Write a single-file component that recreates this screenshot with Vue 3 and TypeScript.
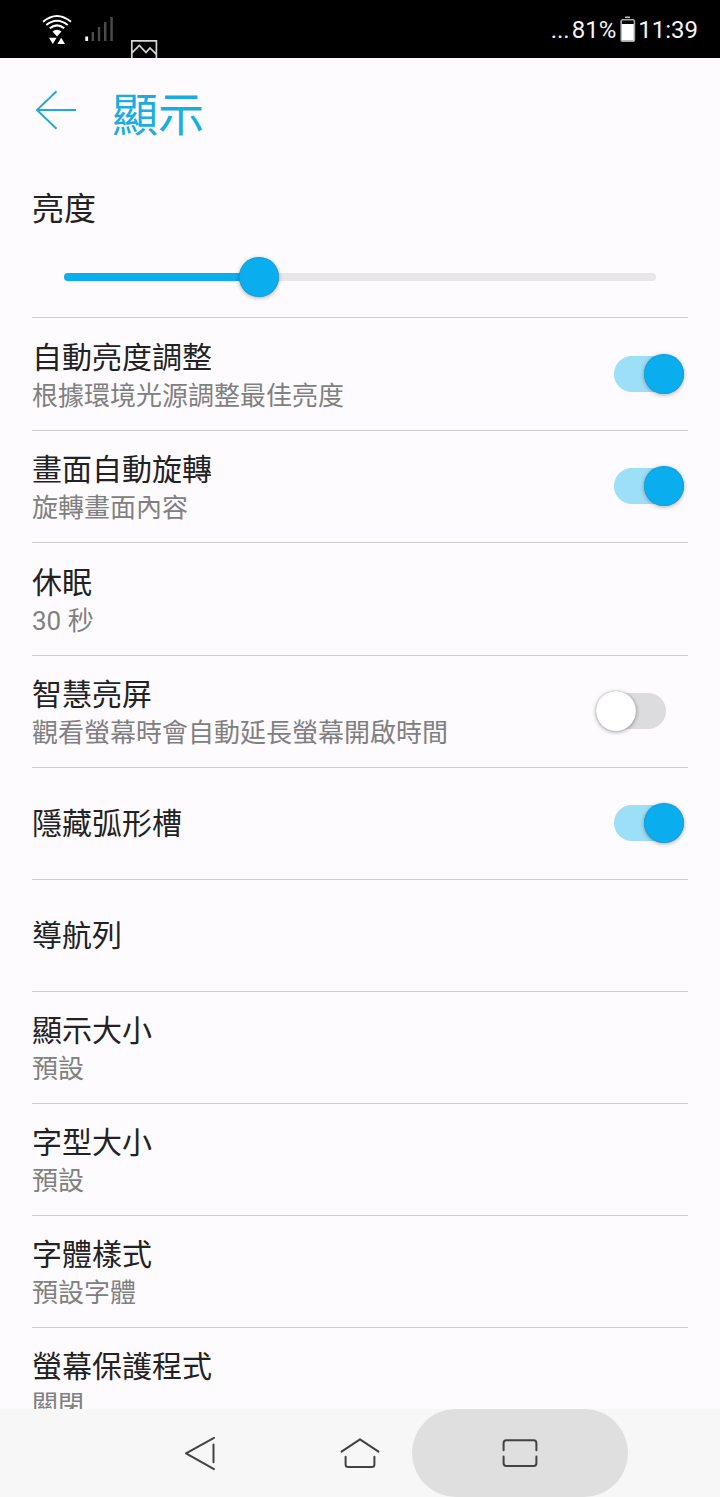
<script setup lang="ts">
interface SettingRow {
  title: string
  summary?: string
  toggle?: 'on' | 'off'
}

const brightness = 33

const rows: SettingRow[] = [
  { title: '自動亮度調整', summary: '根據環境光源調整最佳亮度', toggle: 'on' },
  { title: '畫面自動旋轉', summary: '旋轉畫面內容', toggle: 'on' },
  { title: '休眠', summary: '30 秒' },
  { title: '智慧亮屏', summary: '觀看螢幕時會自動延長螢幕開啟時間', toggle: 'off' },
  { title: '隱藏弧形槽', toggle: 'on' },
  { title: '導航列' },
  { title: '顯示大小', summary: '預設' },
  { title: '字型大小', summary: '預設' },
  { title: '字體樣式', summary: '預設字體' },
  { title: '螢幕保護程式', summary: '關閉' },
]
</script>

<template>
  <div class="phone">
    <header class="status">
      <svg class="status-icons" width="170" height="58" viewBox="0 0 170 58">
        <g fill="none" stroke="#fff" stroke-width="2">
          <path d="M43 21.8Q57 10.2 71 21.8" />
          <path d="M46.3 25Q57 16.4 67.7 25" />
          <path d="M49.8 28.2Q57 22.6 64.2 28.2" />
        </g>
        <path d="M52.5 31.5Q57 28 61.5 31.5L57 36.5Z" fill="#fff" />
        <path d="M49 37.7h7.6L52.8 44ZM57.4 44h7.6L61.2 37.7Z" fill="#fff" />
        <rect x="85.3" y="36.5" width="2.8" height="4.5" fill="#fff" />
        <path d="M91.6 32h2.4v9h-2.4zM97.8 27h2.4v14h-2.4zM104 22h2.4v19H104zM110.4 17h2.4v24h-2.4z" fill="#4b4b4b" />
        <path d="M131.8 60V40.8h24.6V60M132 52.8l7.3-7.3 6.7 7 4-4.6 6.2 6.2" fill="none" stroke="#d6d6d6" stroke-width="1.7" />
      </svg>
      <div class="status-right">
        <span class="dots">...</span>
        <span class="percent">81%</span>
        <svg class="battery" width="16" height="27" viewBox="0 0 16 27">
          <path d="M5 1.3h5" stroke="#bbb" stroke-width="1.6" />
          <rect x="1.2" y="3.7" width="13.2" height="21.6" rx="1.8" fill="#000" stroke="#a8a8a8" stroke-width="1.6" />
          <rect x="1.8" y="8" width="12" height="16.6" fill="#fff" />
        </svg>
        <span class="clock">11:39</span>
      </div>
    </header>

    <main class="screen">
      <div class="titlebar">
        <svg class="back" width="42" height="42" viewBox="0 0 42 42">
          <path d="M42 21H3M22.5 2.2L3 21L22.5 39.8" fill="none" stroke="#21a9dc" stroke-width="1.9" />
        </svg>
        <h1>顯示</h1>
      </div>

      <section class="brightness">
        <h2>亮度</h2>
        <div class="track">
          <div class="fill" :style="{ width: brightness + '%' }"><i class="knob"></i></div>
        </div>
      </section>

      <section v-for="row in rows" :key="row.title" class="row">
        <div class="labels" :class="{ double: row.summary }">
          <div class="title">{{ row.title }}</div>
          <div v-if="row.summary" class="summary">{{ row.summary }}</div>
        </div>
        <div v-if="row.toggle" class="toggle" :class="row.toggle"><i class="knob"></i></div>
      </section>
    </main>

    <nav class="navbar">
      <svg width="40" height="40" viewBox="0 0 40 40">
        <path d="M34 4.8L6 20.3L34 36.1M33.5 11.5V29.3" />
      </svg>
      <svg width="40" height="40" viewBox="0 0 40 40">
        <path d="M1.5 18.7L20 6.3L38.5 18.7M5.6 23.8V31.5Q5.6 34 8.1 34H31.9Q34.4 34 34.4 31.5V23.8" />
      </svg>
      <div class="pressed">
        <svg width="40" height="40" viewBox="0 0 40 40">
          <path d="M3.6 17.3V10Q3.6 7.2 6.4 7.2H33.6Q36.4 7.2 36.4 10V17.3M3.6 23.5V30.3Q3.6 33.1 6.4 33.1H33.6Q36.4 33.1 36.4 30.3V23.5" />
        </svg>
      </div>
    </nav>
  </div>
</template>

<style>
body {
  margin: 0;
}
</style>

<style scoped>
.phone {
  width: 720px;
  height: 1497px;
  display: flex;
  flex-direction: column;
  overflow: hidden;
  background: #fefbff;
  font-family: Roboto, 'Noto Sans CJK TC', sans-serif;
  color: #222;
}
.status {
  height: 58px;
  flex: none;
  display: flex;
  justify-content: space-between;
  background: #000;
  color: #f4f4f4;
}
.status-right {
  display: flex;
  height: 58px;
  padding-right: 22px;
  font-size: 24px;
  line-height: 60px;
}
.dots {
  margin-right: 2px;
}
.battery {
  margin: 16px 2px 0 4px;
}
.screen {
  flex: 1;
  min-height: 0;
  overflow: hidden;
}
.titlebar {
  height: 112px;
  display: flex;
  align-items: center;
}
.back {
  margin: -8px 0 0 34px;
}
h1 {
  margin: 2px 0 0 36px;
  font-size: 46px;
  line-height: 60px;
  font-weight: 400;
  color: #19ade3;
}
.brightness {
  height: 147px;
  margin: 0 32px;
  border-bottom: 1px solid #cfcdd1;
}
h2 {
  margin: 0;
  padding-top: 19px;
  font-size: 32px;
  line-height: 40px;
  font-weight: 400;
}
.track {
  height: 8px;
  margin: 44px 32px 0;
  border-radius: 4px;
  background: #e7e6e8;
}
.fill {
  height: 8px;
  display: flex;
  align-items: center;
  justify-content: flex-end;
  border-radius: 4px;
  background: #0aaeef;
}
.knob {
  width: 40px;
  height: 40px;
  flex: none;
  border-radius: 50%;
  background: #0aaeef;
  box-shadow: 0 1px 4px rgba(0, 0, 0, 0.32), inset 0 0 1px rgba(0, 50, 80, 0.5);
}
.fill .knob {
  margin-right: -20px;
}
.row {
  box-sizing: border-box;
  height: 112px;
  margin: 0 32px;
  display: flex;
  align-items: center;
  justify-content: space-between;
  border-bottom: 1px solid #cfcdd1;
}
.row:nth-of-type(2),
.row:nth-of-type(4) {
  height: 113px;
}
.double {
  padding-top: 5px;
}
.title {
  font-size: 30px;
  line-height: 38px;
}
.summary {
  font-size: 26px;
  line-height: 38px;
  color: #808080;
}
.toggle {
  width: 70px;
  height: 36px;
  margin: -1px 4px 0 0;
  display: flex;
  align-items: center;
  justify-content: flex-end;
  border-radius: 18px;
  background: #9ddff7;
}
.row:nth-of-type(2) .toggle {
  margin-top: 0;
}
.toggle.off {
  margin-right: 22px;
  justify-content: flex-start;
  background: #dcdbde;
}
.off .knob {
  background: #fff;
  box-shadow: 0 1px 4px rgba(0, 0, 0, 0.36), 0 0 1px rgba(0, 0, 0, 0.3);
}
.navbar {
  height: 88px;
  flex: none;
  display: flex;
  align-items: center;
  background: #f7f7f7;
}
.navbar svg {
  fill: none;
  stroke: #424242;
  stroke-width: 2;
  stroke-linecap: round;
  stroke-linejoin: round;
}
.navbar > svg:first-child {
  margin-left: 180px;
}
.navbar > svg:nth-child(2) {
  margin-left: 120px;
}
.pressed {
  width: 216px;
  height: 88px;
  margin-left: 32px;
  display: flex;
  align-items: center;
  justify-content: center;
  border-radius: 44px;
  background: #dfdfdf;
}
</style>
